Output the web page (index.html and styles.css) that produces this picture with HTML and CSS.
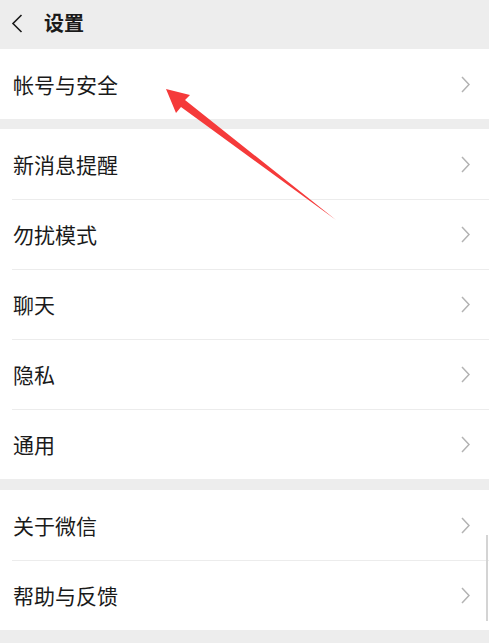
FILE: index.html
```html
<!DOCTYPE html>
<html lang="zh-CN">
<head>
<meta charset="utf-8">
<title>设置</title>
<link rel="stylesheet" href="styles.css">
</head>
<body>
<div class="page">
  <header class="topbar">
    <svg class="back" width="12" height="19" viewBox="0 0 12 19"><polyline points="10.5,1 2,9.5 10.5,18" fill="none" stroke="#1a1a1a" stroke-width="1.6"/></svg>
    <h1 class="title">设置</h1>
  </header>

  <section class="group">
    <div class="row"><span class="label">帐号与安全</span><svg class="chev" width="9" height="17" viewBox="0 0 9 17"><polyline points="1,1 8,8.5 1,16" fill="none" stroke="#b3b3b3" stroke-width="1.5"/></svg></div>
  </section>

  <section class="group">
    <div class="row"><span class="label">新消息提醒</span><svg class="chev" width="9" height="17" viewBox="0 0 9 17"><polyline points="1,1 8,8.5 1,16" fill="none" stroke="#b3b3b3" stroke-width="1.5"/></svg></div>
    <div class="row"><span class="label">勿扰模式</span><svg class="chev" width="9" height="17" viewBox="0 0 9 17"><polyline points="1,1 8,8.5 1,16" fill="none" stroke="#b3b3b3" stroke-width="1.5"/></svg></div>
    <div class="row"><span class="label">聊天</span><svg class="chev" width="9" height="17" viewBox="0 0 9 17"><polyline points="1,1 8,8.5 1,16" fill="none" stroke="#b3b3b3" stroke-width="1.5"/></svg></div>
    <div class="row"><span class="label">隐私</span><svg class="chev" width="9" height="17" viewBox="0 0 9 17"><polyline points="1,1 8,8.5 1,16" fill="none" stroke="#b3b3b3" stroke-width="1.5"/></svg></div>
    <div class="row"><span class="label">通用</span><svg class="chev" width="9" height="17" viewBox="0 0 9 17"><polyline points="1,1 8,8.5 1,16" fill="none" stroke="#b3b3b3" stroke-width="1.5"/></svg></div>
  </section>

  <section class="group">
    <div class="row"><span class="label">关于微信</span><svg class="chev" width="9" height="17" viewBox="0 0 9 17"><polyline points="1,1 8,8.5 1,16" fill="none" stroke="#b3b3b3" stroke-width="1.5"/></svg></div>
    <div class="row"><span class="label">帮助与反馈</span><svg class="chev" width="9" height="17" viewBox="0 0 9 17"><polyline points="1,1 8,8.5 1,16" fill="none" stroke="#b3b3b3" stroke-width="1.5"/></svg></div>
  </section>

  <div class="scrollbar"></div>

  <svg class="annot" width="489" height="643" viewBox="0 0 489 643">
    <polygon points="166,89 190,95 185,100 336,220 181,107 176,113" fill="#f53a3a"/>
  </svg>
</div>
</body>
</html>
```

FILE: styles.css
```css
html, body {
  margin: 0;
  padding: 0;
}
body {
  background: #ededed;
  font-family: "Noto Sans CJK SC", "Noto Sans", sans-serif;
  color: #1a1a1a;
}
.page {
  position: relative;
  width: 489px;
  height: 643px;
  overflow: hidden;
}
.topbar {
  height: 49px;
  display: flex;
  align-items: center;
  padding-left: 11px;
  box-sizing: border-box;
}
.back {
  display: block;
  margin-top: -3px;
}
.title {
  margin: -4px 0 0 21px;
  font-size: 20px;
  font-weight: 700;
  line-height: 1;
}
.group {
  background: #fff;
  margin-bottom: 11px;
}
.group:first-of-type {
  margin-bottom: 10px;
}
.row {
  position: relative;
  height: 70px;
  display: flex;
  align-items: center;
  justify-content: space-between;
  padding: 0 19px 0 13px;
  box-sizing: border-box;
}
.row + .row::before {
  content: "";
  position: absolute;
  top: 0;
  left: 12px;
  right: 0;
  height: 1px;
  background: #ececec;
}
.label {
  font-size: 21px;
  line-height: 1;
  color: #1a1a1a;
}
.chev {
  display: block;
}
.scrollbar {
  position: absolute;
  right: 1px;
  top: 535px;
  width: 2px;
  height: 86px;
  background: #d4d4d4;
}
.annot {
  position: absolute;
  left: 0;
  top: 0;
  pointer-events: none;
}
```
